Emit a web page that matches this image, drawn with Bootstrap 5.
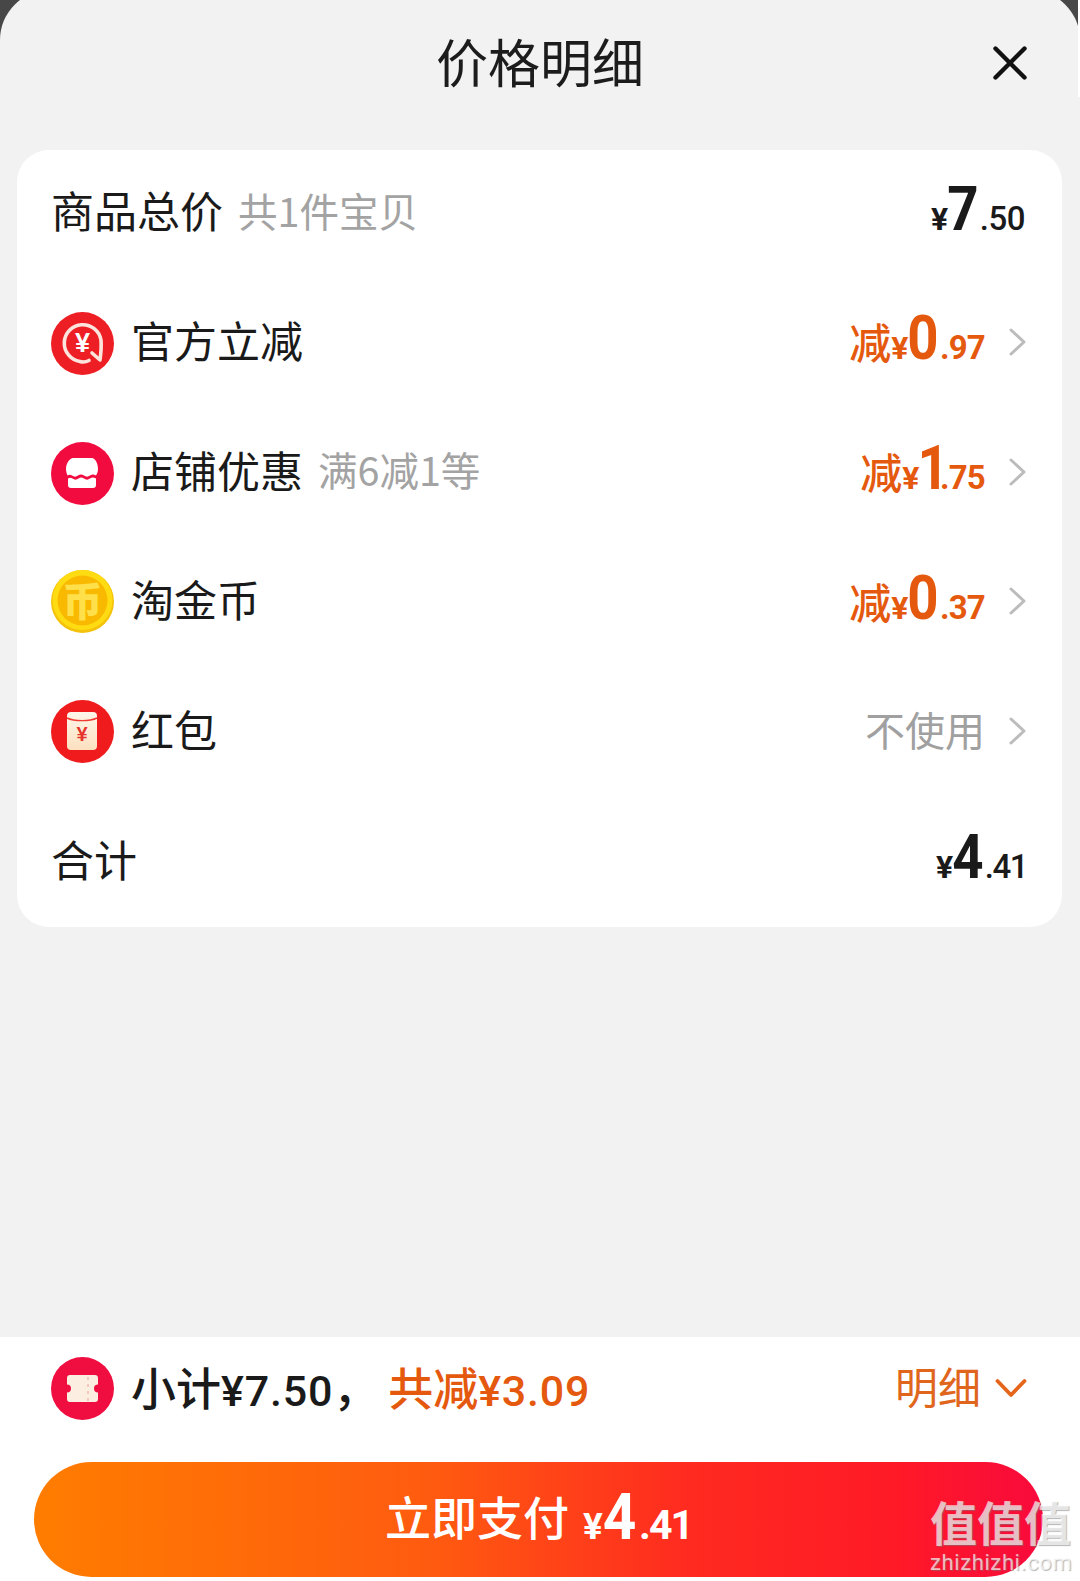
<!DOCTYPE html>
<html lang="zh-CN">
<head>
<meta charset="utf-8">
<title>价格明细</title>
<link href="https://cdn.jsdelivr.net/npm/bootstrap@5.3.0/dist/css/bootstrap.min.css" rel="stylesheet">
<style>
html,body{margin:0;height:1581px;overflow:hidden;background:#474747;}
body{font-family:"Noto Sans CJK SC","Liberation Sans",sans-serif;color:#1a1a1a;position:relative;}
.sheet{margin-top:-10px;height:1591px;background:#f2f2f2;border-radius:50px 50px 0 0;}
.edge-strip{position:absolute;top:0;right:0;width:2px;height:97px;background:#fff;}
.sheet-head{display:grid;grid-template-columns:1fr auto 1fr;height:136px;padding-top:10px;margin-bottom:24px;padding-right:53px;padding-left:53px;}
.sheet-title{font-size:52px;line-height:1;color:#1c1c1c;padding-bottom:4px;}
.close-x{width:34px;height:34px;justify-self:end;}
.price-card{margin:0 18px 0 17px;border-radius:32px;padding-bottom:4px;gap:5.8px;background:#fff;border:0;}
.fee-row{height:124px;padding:0 36px 0 34px;}
.fee-row.plain{padding-left:34px;padding-right:37px;}
.ico{width:63px;height:63px;flex:none;margin-right:17px;}
.ico-low-4{margin-top:4px;}
.ico-low-3{margin-top:3px;}
.ico-low-1{margin-top:1px;}
.fee-name{font-size:43px;line-height:1;padding-bottom:5px;}
.fee-sub{font-size:39.5px;line-height:1;color:#a3a3a3;margin-left:15px;padding-bottom:5px;}
.chev{width:17px;height:28px;margin-left:24px;flex:none;}
.amount{display:flex;align-items:baseline;line-height:1;padding-bottom:7px;}
.amount-cut{color:#e5590f;}
.cut-word{font-size:42px;font-weight:500;}
.yen{font-family:"Roboto",sans-serif;font-size:32px;font-weight:700;}
.big-num{display:inline-block;font-family:"Roboto",sans-serif;font-size:62px;font-weight:700;transform:scaleX(.88);margin:0 -3px;}
.big-one{letter-spacing:-9px;margin-right:-5px;}
.frac{font-family:"Roboto",sans-serif;font-size:33px;font-weight:500;letter-spacing:-.5px;margin-left:2px;}
.amount-cut .frac{font-weight:700;letter-spacing:-.8px;}
.frac-tight{letter-spacing:-1.5px;margin-right:-2px;}
.none-word{font-size:40px;line-height:1;color:#a0a0a0;padding-bottom:5px;}
.foot{margin-top:auto;height:244px;background:#fff;flex:none;}
.foot-row{height:102px;padding:0 53px 0 51px;margin-bottom:23px;}
.foot-text{font-size:45px;line-height:1;font-weight:500;}
.foot-num{font-family:"Roboto",sans-serif;font-size:43px;font-weight:500;letter-spacing:.8px;}
.foot-save{color:#e5590f;margin-left:10px;}
.detail-link{font-size:43px;line-height:1;color:#e0661d;padding-bottom:5px;}
.chev-down{width:32px;height:20px;margin-left:14px;}
.pay-btn{display:flex;align-items:center;justify-content:center;width:1009px;height:115px;margin-left:34px;padding:0;border:0;border-radius:58px;color:#fff;background:linear-gradient(90deg,#ff7d00 0%,#ff5a10 40%,#ff2a20 65%,#ff1a26 85%,#f80a3c 100%);line-height:1;}
.pay-word{font-size:46px;font-weight:500;margin-right:14px;padding-bottom:9px;}
.pay-amount{display:flex;align-items:baseline;padding-bottom:5px;}
.pay-yen{font-family:"Roboto",sans-serif;font-size:37px;font-weight:700;}
.pay-big{display:inline-block;font-family:"Roboto",sans-serif;font-size:65px;font-weight:700;transform:scaleX(.9);margin:0 -2px;}
.pay-frac{font-family:"Roboto",sans-serif;font-size:41px;font-weight:700;letter-spacing:-2px;margin-left:3px;}
.wm{position:absolute;left:930px;top:1501px;width:150px;color:rgba(255,255,255,.68);text-shadow:1px 1px 1px rgba(120,120,120,.55);line-height:1;}
.wm-cn{font-family:"Liberation Sans","Noto Sans CJK SC",sans-serif;font-size:47px;font-weight:700;white-space:nowrap;}
.wm-en{font-family:"Roboto",sans-serif;font-size:22px;letter-spacing:.6px;margin-top:4px;}
</style>
</head>
<body>
<div class="sheet d-flex flex-column">
  <div class="sheet-head align-items-center">
    <span></span>
    <div class="sheet-title">价格明细</div>
    <svg class="close-x" viewBox="0 0 34 34"><path d="M2.5 2.5 31.5 31.5M31.5 2.5 2.5 31.5" stroke="#111" stroke-width="4.4" stroke-linecap="round" fill="none"/></svg>
  </div>

  <div class="card price-card">
    <div class="fee-row plain d-flex align-items-center">
      <span class="fee-name">商品总价</span><span class="fee-sub">共1件宝贝</span>
      <div class="amount ms-auto"><span class="yen">¥</span><span class="big-num">7</span><span class="frac">.50</span></div>
    </div>

    <div class="fee-row d-flex align-items-center">
      <svg class="ico ico-low-4" viewBox="0 0 63 63"><circle cx="31.5" cy="31.5" r="31.5" fill="#ee1f24"/><path d="M38 48.500C35 50 32 50.500 29 49.500A18.500 18.500 0 1 1 50 28C50.500 34 50 41 49 48L41 41" fill="none" stroke="#fde4dc" stroke-width="3.600" stroke-linecap="round" stroke-linejoin="round"/><text x="31.500" y="40" font-family="Liberation Sans" font-weight="700" font-size="27" fill="#fff" text-anchor="middle">¥</text></svg>
      <span class="fee-name">官方立减</span>
      <div class="amount amount-cut ms-auto"><span class="cut-word">减</span><span class="yen">¥</span><span class="big-num">0</span><span class="frac">.97</span></div>
      <svg class="chev" viewBox="0 0 17 28"><path d="M2 2 15 14 2 26" fill="none" stroke="#bcbcbc" stroke-width="3" stroke-linecap="round" stroke-linejoin="round"/></svg>
    </div>

    <div class="fee-row d-flex align-items-center">
      <svg class="ico ico-low-3" viewBox="0 0 63 63"><circle cx="31.5" cy="31.5" r="31.5" fill="#f10b3e"/><path d="M22 16H41C44 16 47 21 47 27C47 30 46 32 45 33.500C43 32 41 32 39 33.500C37 35 35 35 33 33.500C31 32 29 32 27 33.500C25 35 23 35 21 33.500C19 32 17.500 33 16.500 33.500C15.500 31 15 29 15 27C15 21 19 16 22 16Z" fill="#fff"/><path d="M17 36.500C19 35.500 20 35.500 21.500 36.500C23.500 38 25.500 38 27.500 36.500C29.500 35 31 35 33 36.500C35 38 37 38 39 36.500C41 35 43 35.500 45 36.500V43C45 45 44 46 42 46H20C18 46 17 45 17 43Z" fill="#fff"/></svg>
      <span class="fee-name">店铺优惠</span><span class="fee-sub">满6减1等</span>
      <div class="amount amount-cut ms-auto"><span class="cut-word">减</span><span class="yen">¥</span><span class="big-num big-one">1</span><span class="frac">.75</span></div>
      <svg class="chev" viewBox="0 0 17 28"><path d="M2 2 15 14 2 26" fill="none" stroke="#bcbcbc" stroke-width="3" stroke-linecap="round" stroke-linejoin="round"/></svg>
    </div>

    <div class="fee-row d-flex align-items-center">
      <svg class="ico ico-low-1" viewBox="0 0 63 63"><circle cx="31.5" cy="31.5" r="31.5" fill="#f4c20a"/><circle cx="31.5" cy="30" r="30" fill="#ffdc12"/><circle cx="31.5" cy="30.500" r="25" fill="#f9b900"/><text x="31.500" y="45.500" font-family="Noto Sans CJK SC" font-weight="900" font-size="40" fill="#ffe04a" text-anchor="middle">币</text></svg>
      <span class="fee-name">淘金币</span>
      <div class="amount amount-cut ms-auto"><span class="cut-word">减</span><span class="yen">¥</span><span class="big-num">0</span><span class="frac">.37</span></div>
      <svg class="chev" viewBox="0 0 17 28"><path d="M2 2 15 14 2 26" fill="none" stroke="#bcbcbc" stroke-width="3" stroke-linecap="round" stroke-linejoin="round"/></svg>
    </div>

    <div class="fee-row d-flex align-items-center">
      <svg class="ico" viewBox="0 0 63 63"><defs><linearGradient id="pk" x1="0" y1="0" x2="0" y2="1"><stop offset="0" stop-color="#fff6ea"/><stop offset="1" stop-color="#fde0bf"/></linearGradient></defs><circle cx="31.5" cy="31.5" r="31.5" fill="#f01b1d"/><rect x="16" y="12" width="30" height="38" rx="4" fill="url(#pk)"/><path d="M16 18C23 21.500 39 21.500 46 18" fill="none" stroke="#ef3a32" stroke-width="1.400"/><text x="31" y="41" font-family="Liberation Sans" font-weight="700" font-size="20" fill="#e6332c" text-anchor="middle">¥</text></svg>
      <span class="fee-name">红包</span>
      <span class="none-word ms-auto">不使用</span>
      <svg class="chev" viewBox="0 0 17 28"><path d="M2 2 15 14 2 26" fill="none" stroke="#bcbcbc" stroke-width="3" stroke-linecap="round" stroke-linejoin="round"/></svg>
    </div>

    <div class="fee-row plain d-flex align-items-center">
      <span class="fee-name">合计</span>
      <div class="amount ms-auto"><span class="yen">¥</span><span class="big-num">4</span><span class="frac frac-tight">.41</span></div>
    </div>
  </div>

  <div class="foot">
    <div class="foot-row d-flex align-items-center">
      <svg class="ico" viewBox="0 0 63 63"><circle cx="31.5" cy="31.5" r="31.5" fill="#f00d40"/><path d="M19 18H44C46 18 47 19 47 21V27.500A4 4 0 0 0 47 35.500V42C47 44 46 45 44 45H19C17 45 16 44 16 42V35.500A4 4 0 0 0 16 27.500V21C16 19 17 18 19 18Z" fill="#fdeee2"/><path d="M37 20V44" stroke="#f3c9bd" stroke-width="2" stroke-dasharray="3 4"/></svg>
      <span class="foot-text">小计<span class="foot-num">¥7.50</span>，</span>
      <span class="foot-text foot-save">共减<span class="foot-num">¥3.09</span></span>
      <span class="detail-link ms-auto">明细</span>
      <svg class="chev-down" viewBox="0 0 32 20"><path d="M2.500 3 16 17 29.500 3" fill="none" stroke="#e5651b" stroke-width="3.800" stroke-linecap="round" stroke-linejoin="round"/></svg>
    </div>
    <button type="button" class="btn pay-btn"><span class="pay-word">立即支付</span><span class="pay-amount"><span class="pay-yen">¥</span><span class="pay-big">4</span><span class="pay-frac">.41</span></span></button>
  </div>
</div>
<div class="edge-strip"></div>
<div class="wm"><div class="wm-cn">值值值</div><div class="wm-en">zhizhizhi.com</div></div>
<script src="https://cdn.jsdelivr.net/npm/bootstrap@5.3.0/dist/js/bootstrap.bundle.min.js"></script>
</body>
</html>
